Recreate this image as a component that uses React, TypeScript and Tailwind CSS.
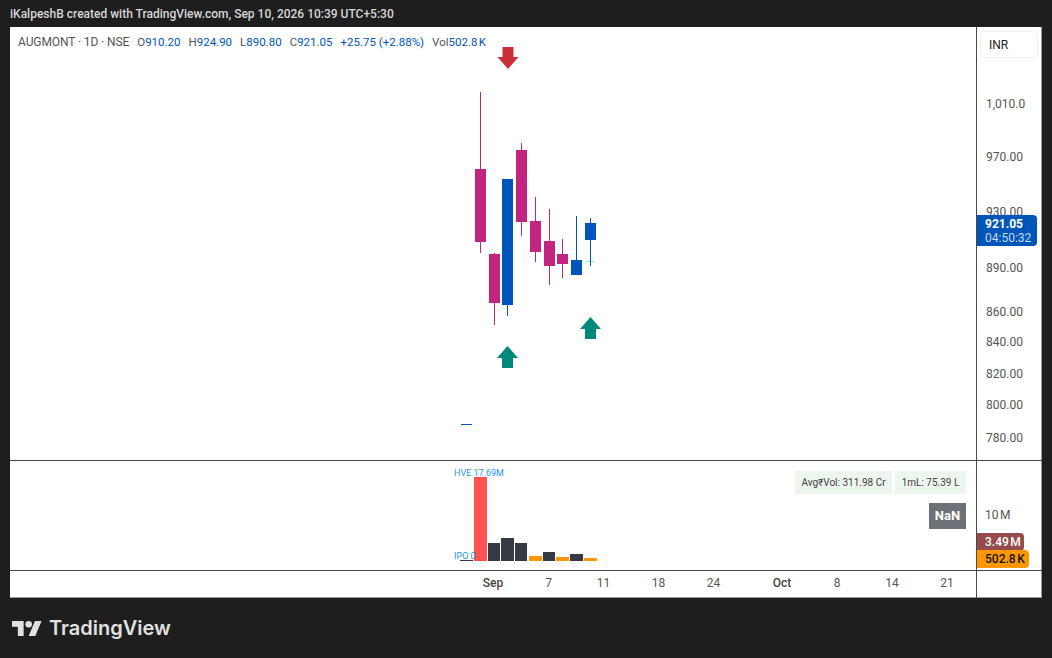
const candles = [
  { x: 480.5, wick: [92, 253], body: [169, 242], up: false },
  { x: 494.5, wick: [253, 325], body: [254, 303], up: false },
  { x: 507.5, wick: [179, 316], body: [179, 305], up: true },
  { x: 521.5, wick: [143, 236], body: [150, 222], up: false },
  { x: 535.5, wick: [197, 262], body: [221, 252], up: false },
  { x: 549.5, wick: [209, 285], body: [241, 266], up: false },
  { x: 562.5, wick: [239, 278], body: [254, 264], up: false },
  { x: 576.5, wick: [216, 275], body: [260, 275], up: true },
  { x: 590.5, wick: [218, 266], body: [223, 240], up: true },
];

const volumes = [
  { x: 474, w: 13, top: 477, color: "#ff5252" },
  { x: 488, w: 12, top: 543, color: "#363a45" },
  { x: 501, w: 13, top: 538, color: "#363a45" },
  { x: 515, w: 12, top: 543, color: "#363a45" },
  { x: 529, w: 13, top: 556, color: "#ff9800" },
  { x: 543, w: 12, top: 552, color: "#363a45" },
  { x: 556, w: 13, top: 557, color: "#ff9800" },
  { x: 570, w: 13, top: 554, color: "#363a45" },
  { x: 584, w: 13, top: 558, color: "#ff9800" },
];

const prices = [
  { label: "1,010.0", y: 103 },
  { label: "970.00", y: 156 },
  { label: "930.00", y: 211 },
  { label: "890.00", y: 267 },
  { label: "860.00", y: 311 },
  { label: "840.00", y: 341 },
  { label: "820.00", y: 373 },
  { label: "800.00", y: 404 },
  { label: "780.00", y: 437 },
];

const dates = [
  { label: "Sep", x: 493, bold: true },
  { label: "7", x: 548.5 },
  { label: "11", x: 603.5 },
  { label: "18", x: 658.5 },
  { label: "24", x: 713.5 },
  { label: "Oct", x: 782, bold: true },
  { label: "8", x: 837 },
  { label: "14", x: 892 },
  { label: "21", x: 947 },
];

const legend = [
  ["O", "910.20"],
  ["H", "924.90"],
  ["L", "890.80"],
  ["C", "921.05"],
];

function UpArrow({ x, y, color }: { x: number; y: number; color: string }) {
  return (
    <polygon
      points={`${x},${y} ${x + 10.5},${y + 12} ${x + 5.5},${y + 12} ${x + 5.5},${y + 22} ${x - 5.5},${y + 22} ${x - 5.5},${y + 12} ${x - 10.5},${y + 12}`}
      fill={color}
    />
  );
}

function PriceChart() {
  return (
    <svg className="absolute inset-0 h-full w-full" viewBox="10 27 966 433">
      {candles.map((c) => {
        const color = c.up ? "#0055b8" : "#c2257f";
        return (
          <g key={c.x}>
            <rect x={c.x - 0.5} y={c.wick[0]} width="1" height={c.wick[1] - c.wick[0]} fill={color} />
            <rect x={c.x - 5.5} y={c.body[0]} width="11" height={c.body[1] - c.body[0]} fill={color} />
          </g>
        );
      })}
      <rect x="586" y="261" width="8" height="1" fill="#9adfe8" />
      <rect x="590" y="261" width="1" height="1" fill="#0055b8" />
      <rect x="461" y="424" width="11" height="1" fill="#0055b8" />
      <polygon
        points="502.5,47 513.5,47 513.5,57 518.5,57 508,69 497.5,57 502.5,57"
        fill="#cc2f3c"
      />
      <UpArrow x={507.5} y={346} color="#00897b" />
      <UpArrow x={590.5} y={317} color="#00897b" />
    </svg>
  );
}

function VolumeChart() {
  return (
    <svg className="absolute inset-0 h-full w-full" viewBox="10 461 966 109">
      <rect x="460" y="560" width="13" height="1" fill="#363a45" />
      {volumes.map((v) => (
        <rect key={v.x} x={v.x} y={v.top} width={v.w} height={561 - v.top} fill={v.color} />
      ))}
    </svg>
  );
}

export default function App() {
  return (
    <div className="h-[658px] w-[1052px] overflow-hidden bg-[#1e1e1e] font-['Roboto','Noto_Sans',sans-serif]">
      <div className="flex h-[27px] items-center pl-[10px] text-[12px] font-medium text-[#d6d6d6]">
        iKalpeshB created with TradingView.com, Sep 10, 2026 10:39 UTC+5:30
      </div>

      <div className="ml-[10px] grid h-[571px] w-[1032px] grid-cols-[967px_65px] grid-rows-[434px_110px_27px] border-r border-b border-[#9a9a9a] bg-white text-[12px] text-[#555]">
        <div className="relative border-r border-b border-[#4a4a4a]">
          <PriceChart />
          <div className="absolute top-[7px] left-[8px] flex items-center gap-[8px] text-[11.5px] leading-4 text-[#555]">
            <span className="text-[12px] tracking-[-0.1px]">AUGMONT · 1D · NSE</span>
            {legend.map(([k, v]) => (
              <span key={k}>
                {k}
                <span className="text-[#0055b8]">{v}</span>
              </span>
            ))}
            <span className="text-[#0055b8]">+25.75 (+2.88%)</span>
            <span>
              Vol<span className="text-[#0055b8]">502.8{"\u202F"}K</span>
            </span>
          </div>
        </div>

        <div className="relative border-b border-[#4a4a4a]">
          <div className="mt-[4px] ml-[3px] flex h-[27px] w-[58px] items-center rounded border border-[#f0f0f0] pl-[8px] text-[#222]">
            INR
          </div>
          {prices.map((p) => (
            <span
              key={p.label}
              className="absolute left-[9px] -translate-y-1/2 leading-4"
              style={{ top: p.y - 26 }}
            >
              {p.label}
            </span>
          ))}
          <div className="absolute top-[188px] left-0 flex h-[31px] w-[60px] flex-col justify-center rounded-r-sm bg-[#0055b8] pl-[8px] text-[12px] leading-[14px]">
            <span className="font-bold text-white">921.05</span>
            <span className="text-[#c8d8ee]">04:50:32</span>
          </div>
        </div>

        <div className="relative border-r border-b border-[#4a4a4a]">
          <VolumeChart />
          <span className="absolute top-[6px] left-[444px] text-[9px] leading-3 text-[#2196f3]">HVE 17.69M</span>
          <span className="absolute top-[89px] left-[444px] text-[9px] leading-3 text-[#2196f3]">IPO 0</span>
          <div className="absolute top-[10px] right-[10px] flex flex-col items-end gap-[9px]">
            <div className="flex gap-[3px] text-[10px] text-[#444]">
              <span className="flex h-[23px] w-[97px] items-center justify-center bg-[#ecf5ee]">Avg₹Vol: 311.98 Cr</span>
              <span className="flex h-[23px] w-[71px] items-center justify-center bg-[#ecf5ee]">1mL: 75.39 L</span>
            </div>
            <span className="flex h-[26px] w-[37px] items-center justify-center bg-[#6f7178] text-[13px] font-bold text-white">
              NaN
            </span>
          </div>
        </div>

        <div className="relative border-b border-[#4a4a4a]">
          <span className="absolute top-[46px] left-[8px] leading-4">10{"\u202F"}M</span>
          <span className="absolute top-[72px] left-0 flex h-[18px] w-[47px] items-center rounded-r-sm bg-[#964c4c] pl-[8px] font-medium text-white">
            3.49{"\u202F"}M
          </span>
          <span className="absolute top-[89px] left-0 flex h-[18px] w-[52px] items-center rounded-r-sm bg-[#ff9800] pl-[8px] font-medium text-[#111]">
            502.8{"\u202F"}K
          </span>
        </div>

        <div className="relative border-r border-[#4a4a4a]">
          {dates.map((d) => (
            <span
              key={d.label}
              className={`absolute top-[4px] -translate-x-1/2 leading-4 ${d.bold ? "font-medium text-[#444]" : ""}`}
              style={{ left: d.x - 10 }}
            >
              {d.label}
            </span>
          ))}
        </div>
        <div />
      </div>

      <div className="mt-[22px] ml-[12px] flex h-[16px] items-center gap-[7px] text-[#e0e0e0]">
        <svg width="30" height="15" viewBox="0 4 36 18" fill="currentColor">
          <path d="M14 22H7V11H0V4h14v18zM28 22h-8l7.5-18h8L28 22z" />
          <circle cx="20" cy="8" r="4" />
        </svg>
        <span className="font-['Inter',sans-serif] text-[20px] leading-none font-semibold">TradingView</span>
      </div>
    </div>
  );
}
